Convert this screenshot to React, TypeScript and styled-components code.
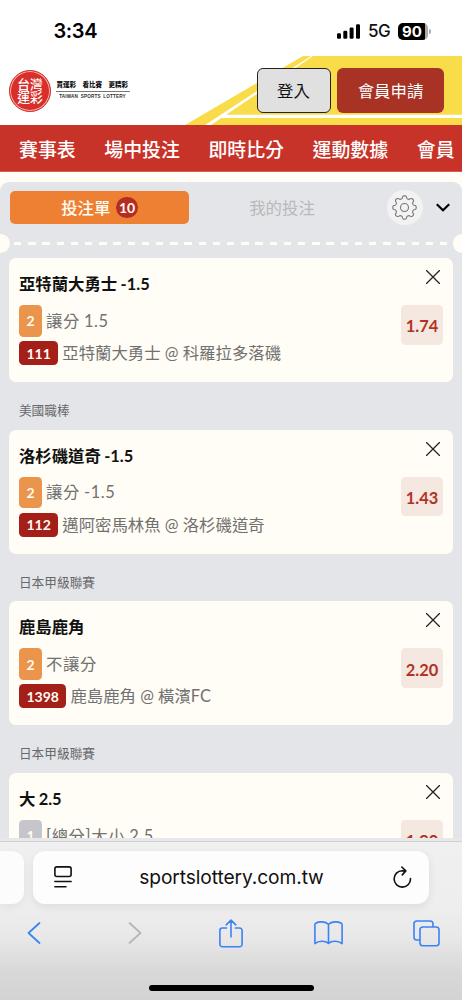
import React from "react";
import styled, { createGlobalStyle } from "styled-components";

const CJK = '"Noto Sans CJK TC"';

const GlobalStyle = createGlobalStyle`
  * { box-sizing: border-box; }
  body { margin: 0; background: #fff; }
  button { font: inherit; padding: 0; margin: 0; }
  svg { display: block; flex: none; }
`;

const Screen = styled.div`
  width: 462px;
  height: 1000px;
  overflow: hidden;
  display: flex;
  flex-direction: column;
  font-family: Lato, ${CJK}, sans-serif;
  white-space: nowrap;
  background: #fffdf5;
`;

const StatusBar = styled.div`
  flex: none;
  height: 56px;
  padding: 6px 31.5px 0 53.5px;
  display: flex;
  align-items: center;
  background: #fff;
  font-family: Inter, sans-serif;
`;

const Clock = styled.span`
  flex: 1;
  font-size: 20px;
  font-weight: 600;
  letter-spacing: -0.4px;
`;

const Network = styled.span`
  margin: 0 7px 0 7.5px;
  font-size: 17px;
  font-weight: 500;
  letter-spacing: -0.3px;
  color: #111;
`;

const Battery = styled.div`
  width: 30px;
  height: 17px;
  border-radius: 5px;
  background: linear-gradient(90deg, #000 27px, #aaa 27px);
  color: #fff;
  font-size: 15px;
  font-weight: 700;
  line-height: 17px;
  text-align: center;
  padding-right: 1px;
`;

const BatteryTip = styled.div`
  width: 2px;
  height: 5px;
  margin-left: 1px;
  border-radius: 0 2px 2px 0;
  background: #aaa;
`;

const Header = styled.header`
  flex: none;
  position: relative;
  height: 69px;
  padding: 12px 18px 0 9px;
  display: flex;
  align-items: flex-start;
  background: #fff;
`;

const Stripes = styled.svg`
  position: absolute;
  right: 0;
  top: 0;
`;

const Seal = styled.div`
  flex: none;
  width: 42px;
  height: 42px;
  margin-top: 1.5px;
  border-radius: 50%;
  border: 1px solid #d92f2a;
  box-shadow: inset 0 0 0 1px #f3b9b4;
  background: #d92f2a;
  color: #fff;
  font-family: ${CJK}, sans-serif;
  font-weight: 500;
  font-size: 12.8px;
  line-height: 12.8px;
  text-align: center;
  padding-top: 7.5px;
`;

const Slogan = styled.div`
  width: 74px;
  margin: 11px 0 0 4.5px;
  flex: none;
`;

const SloganMain = styled.div`
  display: flex;
  justify-content: space-between;
  padding: 0 1.5px 0 1px;
  font-family: ${CJK}, sans-serif;
  font-size: 6.5px;
  font-weight: 900;
  line-height: 11.5px;
  color: #111;
  border-bottom: 1px solid #777;
`;

const SloganSub = styled.div`
  font-family: "Liberation Sans", sans-serif;
  font-size: 4.7px;
  font-weight: 700;
  line-height: 9px;
  letter-spacing: 0.12px;
  word-spacing: 1.2px;
  text-align: center;
  color: #333;
`;

const HeaderActions = styled.div`
  position: relative;
  margin-left: auto;
  display: flex;
  gap: 6.5px;
`;

const HeaderButton = styled.button<{ $primary?: boolean }>`
  width: ${(p) => (p.$primary ? 107 : 74)}px;
  height: 45px;
  padding-bottom: 1px;
  border-radius: 6px;
  border: ${(p) => (p.$primary ? "0" : "1.5px solid #222")};
  background: ${(p) => (p.$primary ? "#a83224" : "#e0e0e0")};
  color: ${(p) => (p.$primary ? "#fff" : "#111")};
  font-family: ${CJK}, sans-serif;
  font-size: 16.4px;
  font-weight: 400;
`;

const Nav = styled.nav`
  flex: none;
  height: 47px;
  padding: 0 0 0 19px;
  display: flex;
  align-items: center;
  gap: 28.6px;
  background: #c83329;
  border-bottom: 1px solid #d8594e;
  color: #fff;
  font-family: ${CJK}, sans-serif;
  font-size: 18.9px;
  font-weight: 500;
`;

const Slip = styled.main`
  flex: none;
  height: 656px;
  margin-top: 9.5px;
  overflow: hidden;
  border-radius: 9px 9px 0 0;
  background: #e3e5e8;
`;

const TabRow = styled.div`
  height: 52px;
  padding: 0 10px 0 9.5px;
  display: flex;
  align-items: center;
`;

const Tab = styled.div<{ $active?: boolean }>`
  width: ${(p) => (p.$active ? 179 : 186)}px;
  height: 33px;
  padding: 0 0 1px 1px;
  border-radius: 5px;
  display: flex;
  align-items: center;
  justify-content: center;
  gap: 6px;
  background: ${(p) => (p.$active ? "#ed8032" : "transparent")};
  color: ${(p) => (p.$active ? "#fffdf5" : "#b7b9ba")};
  font-size: 16.4px;
  font-weight: ${(p) => (p.$active ? 500 : 400)};
`;

const Count = styled.span`
  width: 21.5px;
  height: 21.5px;
  margin-top: 1px;
  border-radius: 50%;
  background: #b52c20;
  font-family: Lato, sans-serif;
  font-size: 14px;
  font-weight: 700;
  line-height: 22px;
  text-align: center;
`;

const GearButton = styled.button`
  width: 35.5px;
  height: 35.5px;
  margin: 0 13.5px 0 12.5px;
  border: 0;
  border-radius: 50%;
  display: grid;
  place-items: center;
  background: #f2f2f2;
`;

const TearLine = styled.div`
  height: 19px;
  display: flex;
  align-items: center;
  justify-content: space-between;
`;

const Notch = styled.i<{ $right?: boolean }>`
  width: 9.5px;
  height: 19px;
  background: #fffdf5;
  border-radius: ${(p) => (p.$right ? "10px 0 0 10px" : "0 10px 10px 0")};
`;

const Dashes = styled.i`
  flex: 1;
  height: 2.6px;
  margin: 1px 4.5px 0;
  background: repeating-linear-gradient(90deg, #fffdf5 0 7.5px, transparent 7.5px 14.2px);
`;

const BetList = styled.div`
  padding: 5.6px 9.5px 0 9.4px;
`;

const League = styled.div`
  height: 47.6px;
  padding: 0 0 0 9.5px;
  line-height: 57px;
  font-size: 12.7px;
  color: #68696b;
`;

const Card = styled.section`
  height: 124px;
  padding: 12px 9.5px 0;
  border-radius: 7px;
  background: #fffdf5;
  display: flex;
  justify-content: space-between;
`;

const CardText = styled.div`
  display: flex;
  flex-direction: column;
`;

const CardTitle = styled.h2`
  margin: 0 0 5.5px;
  height: 29.5px;
  line-height: 28px;
  font-size: 16.4px;
  font-weight: 700;
  word-spacing: -0.6px;
  color: #111;
`;

const Line = styled.div<{ $spaced?: boolean }>`
  display: flex;
  align-items: center;
  gap: 4px;
  height: ${(p) => (p.$spaced ? 31.5 : 24)}px;
  margin-bottom: 4.5px;
  font-size: 16.4px;
  line-height: 24px;
  letter-spacing: ${(p) => (p.$spaced ? "0.6px" : "0")};
  word-spacing: ${(p) => (p.$spaced ? "-0.8px" : "0")};
  color: #717171;
`;

const Tag = styled.span<{ $tone: "orange" | "gray" | "red" }>`
  height: 100%;
  min-width: 22.5px;
  padding: 1px 7.5px 0;
  display: flex;
  align-items: center;
  justify-content: center;
  border-radius: 4.5px;
  background: ${(p) => ({ orange: "#ea944c", gray: "#c6c5cb", red: "#a41f17" })[p.$tone]};
  color: #fffdf5;
  font-size: 14px;
  font-weight: 700;
  letter-spacing: 0;
`;

const CardSide = styled.div`
  display: flex;
  flex-direction: column;
  align-items: flex-end;
  gap: 21px;
`;

const CloseIcon = styled.svg`
  margin: 0 3px 0 0;
`;

const Odds = styled.div`
  width: 42px;
  height: 39.5px;
  padding-top: 2px;
  border-radius: 4.5px;
  display: grid;
  place-items: center;
  background: #f5e8e0;
  color: #b33224;
  font-size: 16.4px;
  font-weight: 700;
`;

const Browser = styled.footer`
  flex: 1;
  margin-top: 3px;
  border-top: 1px solid #cfcfd0;
  box-shadow: 0 -3px 0 #e7e8ea;
  z-index: 1;
  background: linear-gradient(180deg, #f0f0f0 0, #eeeeee 65px, #e8e8e8 95px, #d8d8d8 130px, #d3d3d3 100%);
`;

const AddressRow = styled.div`
  display: flex;
  gap: 9.5px;
  padding-top: 9px;
`;

const PreviousPage = styled.div`
  width: 23.5px;
  height: 53px;
  border-radius: 0 12px 12px 0;
  background: #fcfcfc;
  box-shadow: 0 3px 10px rgba(0, 0, 0, 0.06);
`;

const AddressBar = styled.div`
  width: 396px;
  height: 53px;
  padding: 0 17px 0 21px;
  border-radius: 12px;
  display: flex;
  align-items: center;
  justify-content: space-between;
  background: #fdfdfd;
  box-shadow: 0 3px 10px rgba(0, 0, 0, 0.08);
  font-family: Inter, sans-serif;
  font-size: 19.2px;
  color: #111;
`;

const Address = styled.span`
  letter-spacing: -0.1px;
  padding-right: 2px;
`;

const Toolbar = styled.div`
  height: 59px;
  padding: 0 22.5px 0 20.5px;
  display: flex;
  align-items: center;
  justify-content: space-between;
`;

const ToolButton = styled.span<{ $indent?: number }>`
  width: 27px;
  padding-left: ${(p) => p.$indent ?? 0}px;
  display: flex;
  justify-content: center;
`;

const HomeIndicator = styled.div`
  width: 165px;
  height: 6px;
  margin: 22px auto 0;
  border-radius: 3px;
  background: #000;
`;

type Bet = {
  title: string;
  pick: string;
  market: string;
  code?: string;
  teams?: string;
  odds: string;
  league?: string;
};

const bets: Bet[] = [
  { title: "亞特蘭大勇士 -1.5", pick: "2", market: "讓分 1.5", code: "111", teams: "亞特蘭大勇士 @ 科羅拉多落磯", odds: "1.74" },
  { league: "美國職棒", title: "洛杉磯道奇 -1.5", pick: "2", market: "讓分 -1.5", code: "112", teams: "邁阿密馬林魚 @ 洛杉磯道奇", odds: "1.43" },
  { league: "日本甲級聯賽", title: "鹿島鹿角", pick: "2", market: "不讓分", code: "1398", teams: "鹿島鹿角 @ 橫濱FC", odds: "2.20" },
  { league: "日本甲級聯賽", title: "大 2.5", pick: "1", market: "[總分]大小 2.5", odds: "1.90" },
];

// Eight rounded teeth: the radius swings smoothly between root and tip.
const gearPath =
  Array.from({ length: 128 }, (_, i) => {
    const a = (i / 128) * Math.PI * 2;
    const r = 10.4 + (1.3 * Math.tanh(2 * Math.cos(8 * a))) / Math.tanh(2);
    return `${i ? "L" : "M"}${(12.5 + r * Math.sin(a)).toFixed(2)} ${(12.5 - r * Math.cos(a)).toFixed(2)}`;
  }).join("") + "Z";

function BetCard({ bet }: { bet: Bet }) {
  return (
    <>
      {bet.league && <League>{bet.league}</League>}
      <Card>
        <CardText>
          <CardTitle>{bet.title}</CardTitle>
          <Line $spaced>
            <Tag $tone={bet.pick === "1" ? "gray" : "orange"}>{bet.pick}</Tag>
            {bet.market}
          </Line>
          {bet.code && (
            <Line>
              <Tag $tone="red">{bet.code}</Tag>
              {bet.teams}
            </Line>
          )}
        </CardText>
        <CardSide>
          <CloseIcon width="14" height="14" viewBox="0 0 14 14" stroke="#222" strokeWidth="1.3" strokeLinecap="round">
            <path d="M.5 .5 13.5 13.5M13.5 .5 .5 13.5" />
          </CloseIcon>
          <Odds>{bet.odds}</Odds>
        </CardSide>
      </Card>
    </>
  );
}

export default function App() {
  return (
    <Screen>
      <GlobalStyle />
      <StatusBar>
        <Clock>3:34</Clock>
        <svg width="23" height="15" viewBox="0 0 23 15">
          <rect x="0" y="9.3" width="4" height="5.5" rx="1.2" />
          <rect x="6.3" y="6.8" width="4" height="8" rx="1.2" />
          <rect x="12.6" y="3.5" width="4" height="11.3" rx="1.2" />
          <rect x="19" y="0.2" width="4" height="14.6" rx="1.2" />
        </svg>
        <Network>5G</Network>
        <Battery>90</Battery>
        <BatteryTip />
      </StatusBar>

      <Header>
        <Stripes width="282" height="69" viewBox="180 56 282 69">
          <path d="M185 125 303 56H462V125Z" fill="#f9dc4a" />
          <path d="M205 125 311 56H313L211 125ZM220 118 226 114.7H462V118Z" fill="#fff" />
        </Stripes>
        <Seal>
          台灣
          <br />
          運彩
        </Seal>
        <Slogan>
          <SloganMain>
            <span>買運彩</span>
            <span>看比賽</span>
            <span>更精彩</span>
          </SloganMain>
          <SloganSub>TAIWAN SPORTS LOTTERY</SloganSub>
        </Slogan>
        <HeaderActions>
          <HeaderButton>登入</HeaderButton>
          <HeaderButton $primary>會員申請</HeaderButton>
        </HeaderActions>
      </Header>

      <Nav>
        <span>賽事表</span>
        <span>場中投注</span>
        <span>即時比分</span>
        <span>運動數據</span>
        <span>會員</span>
      </Nav>

      <Slip>
        <TabRow>
          <Tab $active>
            投注單 <Count>10</Count>
          </Tab>
          <Tab>我的投注</Tab>
          <GearButton aria-label="設定">
            <svg width="25" height="25" viewBox="0 0 25 25" fill="none" stroke="#777" strokeWidth="1.1" strokeLinejoin="round">
              <path d={gearPath} />
              <circle cx="12.5" cy="12.5" r="4" />
            </svg>
          </GearButton>
          <svg width="14" height="9" viewBox="0 0 14 9" fill="none" stroke="#000" strokeWidth="2.2">
            <path d="M.8 1.2 7 7.2 13.2 1.2" />
          </svg>
        </TabRow>
        <TearLine>
          <Notch />
          <Dashes />
          <Notch $right />
        </TearLine>
        <BetList>
          {bets.map((bet) => (
            <BetCard key={bet.title} bet={bet} />
          ))}
        </BetList>
      </Slip>

      <Browser>
        <AddressRow>
          <PreviousPage />
          <AddressBar>
            <svg width="18" height="22" viewBox="0 0 18 22" fill="none" stroke="#111" strokeWidth="1.6" strokeLinecap="round">
              <rect x=".9" y=".9" width="16.2" height="9.6" rx="2" />
              <path d="M.9 15.5H17.1M.9 20.7H12" />
            </svg>
            <Address>sportslottery.com.tw</Address>
            <svg width="19" height="22" viewBox="0 0 19 22" fill="none" stroke="#111" strokeWidth="1.6" strokeLinecap="round" strokeLinejoin="round">
              <path d="M17.5 12.5A8.2 8.2 0 1 1 9.3 4.7L12.8 4.9M8.8 1 12.8 4.9 9.3 8.9" />
            </svg>
          </AddressBar>
        </AddressRow>
        <Toolbar>
          <ToolButton>
            <svg width="14" height="22" viewBox="0 0 14 22" fill="none" stroke="#3b82f6" strokeWidth="1.7" strokeLinecap="round" strokeLinejoin="round">
              <path d="M12.5 1 1.5 11 12.5 21" />
            </svg>
          </ToolButton>
          <ToolButton $indent={6}>
            <svg width="14" height="22" viewBox="0 0 14 22" fill="none" stroke="#b5b5b5" strokeWidth="1.7" strokeLinecap="round" strokeLinejoin="round">
              <path d="M1.5 1 12.5 11 1.5 21" />
            </svg>
          </ToolButton>
          <ToolButton $indent={2}>
            <svg width="24" height="29" viewBox="0 0 24 29" fill="none" stroke="#3b82f6" strokeWidth="1.6" strokeLinecap="round" strokeLinejoin="round">
              <path d="M7.5 9H3.4A2.5 2.5 0 0 0 .9 11.5V25.2A2.5 2.5 0 0 0 3.4 27.7H20.6A2.5 2.5 0 0 0 23.1 25.2V11.5A2.5 2.5 0 0 0 20.6 9H16.5M12 18V1.2M7.2 5.8 12 1.2 16.8 5.8" />
            </svg>
          </ToolButton>
          <ToolButton>
            <svg width="29" height="24" viewBox="0 0 29 24" fill="none" stroke="#3b82f6" strokeWidth="1.6" strokeLinejoin="round">
              <path d="M14.5 3.3C11.5 .3 5 .2 1.8 2.2Q.9 2.9 .9 4V22.6C4.5 19.7 11 19.3 14.5 22.3C18 19.3 24.5 19.7 28.1 22.6V4Q28.1 2.9 27.2 2.2C24 .2 17.5 .3 14.5 3.3ZM14.5 3.3V22.3" />
            </svg>
          </ToolButton>
          <ToolButton>
            <svg width="27" height="27" viewBox="0 0 27 27" fill="none" stroke="#3b82f6" strokeWidth="1.6">
              <rect x="7" y="7" width="19" height="18.8" rx="2.8" />
              <path d="M7 20H3.8A2.8 2.8 0 0 1 1 17.2V3.8A2.8 2.8 0 0 1 3.8 1H17.2A2.8 2.8 0 0 1 20 3.8V7" />
            </svg>
          </ToolButton>
        </Toolbar>
        <HomeIndicator />
      </Browser>
    </Screen>
  );
}
